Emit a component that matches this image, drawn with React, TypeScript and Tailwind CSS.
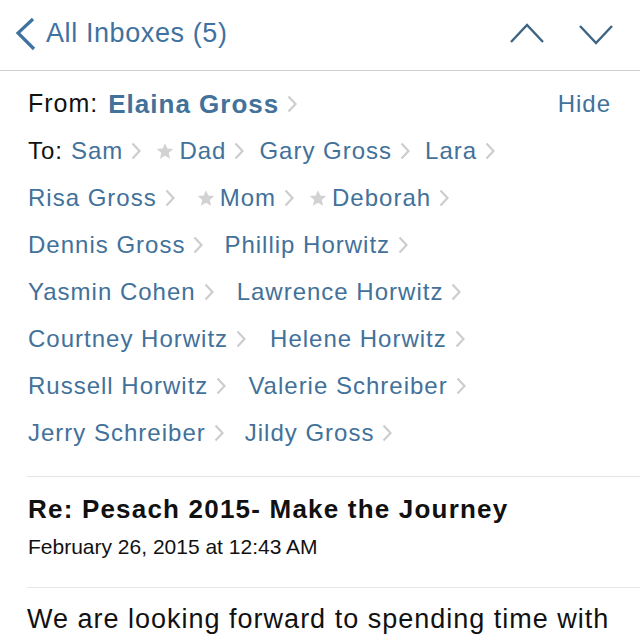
import React from "react";

type Contact = { name: string; star?: boolean; gap: string };

const blue = "text-[#42719a]";

function Chevron() {
  return (
    <svg width="10" height="18" viewBox="0 0 10 18" className="ml-[8px] shrink-0">
      <path d="M1.5 1.5 L8.5 9 L1.5 16.5" fill="none" stroke="#cdcdcd" strokeWidth="2.2" />
    </svg>
  );
}

function Star() {
  return (
    <svg width="18" height="18" viewBox="0 0 24 24" className="mr-[5px] shrink-0">
      <path
        d="M12 1.5l3.1 7.2 7.8.7-5.9 5.2 1.8 7.7L12 18.3l-6.8 4 1.8-7.7-5.9-5.2 7.8-.7z"
        fill="#d2d2d2"
      />
    </svg>
  );
}

function Name({ c }: { c: Contact }) {
  return (
    <div className={`flex items-center ${c.gap}`}>
      {c.star && <Star />}
      <span className={`${blue} text-[24px] tracking-[1px] leading-none`}>{c.name}</span>
      <Chevron />
    </div>
  );
}

const rows: Contact[][] = [
  [
    { name: "Risa Gross", gap: "ml-0" },
    { name: "Mom", star: true, gap: "ml-[22px]" },
    { name: "Deborah", star: true, gap: "ml-[15px]" },
  ],
  [
    { name: "Dennis Gross", gap: "ml-0" },
    { name: "Phillip Horwitz", gap: "ml-[21px]" },
  ],
  [
    { name: "Yasmin Cohen", gap: "ml-0" },
    { name: "Lawrence Horwitz", gap: "ml-[23px]" },
  ],
  [
    { name: "Courtney Horwitz", gap: "ml-0" },
    { name: "Helene Horwitz", gap: "ml-[24px]" },
  ],
  [
    { name: "Russell Horwitz", gap: "ml-0" },
    { name: "Valerie Schreiber", gap: "ml-[22px]" },
  ],
  [
    { name: "Jerry Schreiber", gap: "ml-0" },
    { name: "Jildy Gross", gap: "ml-[21px]" },
  ],
];

const toRow: Contact[] = [
  { name: "Sam", gap: "ml-[8px]" },
  { name: "Dad", star: true, gap: "ml-[15px]" },
  { name: "Gary Gross", gap: "ml-[15px]" },
  { name: "Lara", gap: "ml-[15px]" },
];

export default function App() {
  return (
    <div className="w-[640px] h-[640px] overflow-hidden bg-white font-['Liberation_Sans',Arial,sans-serif] text-[#111]">
      {/* nav bar */}
      <div className="h-[71px] border-b border-[#cfcfd3] flex items-center pl-[14px] pr-[26px]">
        <svg width="24" height="36" viewBox="0 0 24 36" className="shrink-0 -mt-[3px]">
          <path d="M19 3 L4 17 L20 33" fill="none" stroke="#3f72a0" strokeWidth="3.2" />
        </svg>
        <span className="ml-[8px] -mt-[3px] text-[27px] tracking-[0.6px] text-[#3f72a0]">All Inboxes (5)</span>
        <div className="ml-auto flex items-center gap-[33px] -mt-[3px]">
          <svg width="36" height="22" viewBox="0 0 36 22">
            <path d="M2 19 L18 2 L34 19" fill="none" stroke="#3e6483" strokeWidth="2.4" />
          </svg>
          <svg width="36" height="22" viewBox="0 0 36 22">
            <path d="M2 3 L18 20 L34 3" fill="none" stroke="#3e6483" strokeWidth="2.4" />
          </svg>
        </div>
      </div>

      {/* header */}
      <div className="pl-[28px] pr-[29px] pt-[9px]">
        <div className="h-[47px] flex items-center">
          <span className="text-[25px] tracking-[1px] leading-none">From:</span>
          <span className={`ml-[10px] ${blue} text-[26px] font-bold tracking-[1px] leading-none`}>
            Elaina Gross
          </span>
          <Chevron />
          <span className={`ml-auto ${blue} text-[24px] tracking-[1px] leading-none`}>Hide</span>
        </div>
        <div className="h-[47px] flex items-center">
          <span className="text-[24px] tracking-[1px] leading-none">To:</span>
          {toRow.map((c) => (
            <Name key={c.name} c={c} />
          ))}
        </div>
        {rows.map((r, i) => (
          <div key={i} className="h-[47px] flex items-center">
            {r.map((c) => (
              <Name key={c.name} c={c} />
            ))}
          </div>
        ))}
      </div>

      <div className="ml-[27px] mt-[20px] h-px bg-[#e4e4e4]" />

      {/* subject */}
      <div className="pl-[28px] pt-[13px]">
        <div className="h-[38px] flex items-center text-[26px] font-bold tracking-[1.2px] leading-none">
          Re: Pesach 2015- Make the Journey
        </div>
        <div className="h-[38px] flex items-center text-[21px] leading-none -mt-[1px]">
          February 26, 2015 at 12:43 AM
        </div>
      </div>

      <div className="ml-[27px] mt-[22px] h-px bg-[#e8e8e8]" />

      <div className="pl-[27px] pt-[18px] text-[27px] tracking-[1px] leading-none">
        We are looking forward to spending time with
      </div>
    </div>
  );
}
